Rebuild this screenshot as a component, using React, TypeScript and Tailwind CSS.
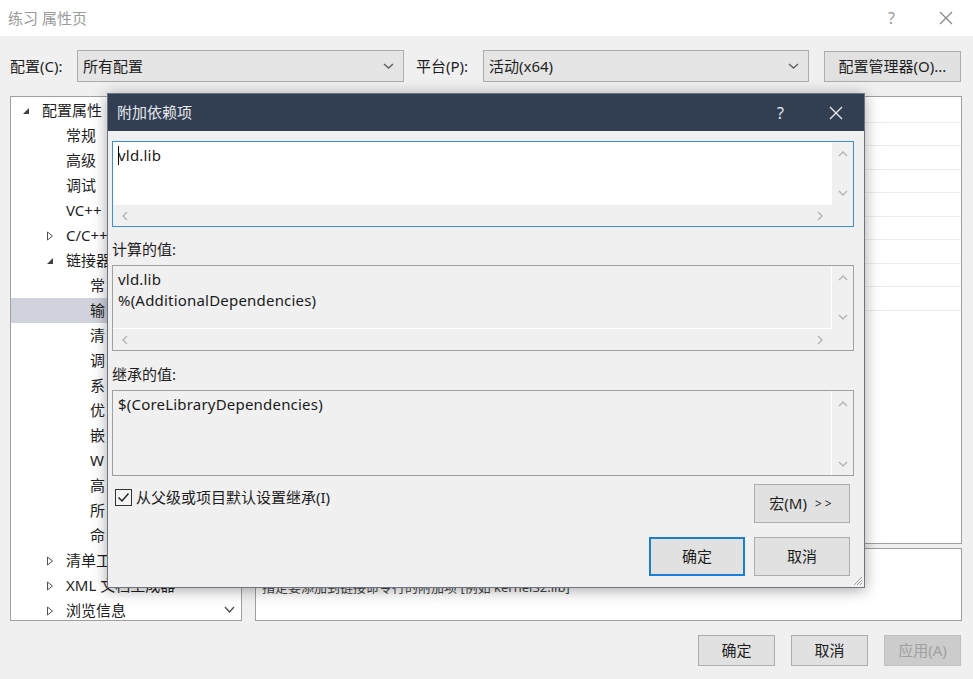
import React from "react";

const F = "font-['Noto_Sans','Noto_Sans_CJK_SC',sans-serif]";

function Chev({ dir, color = "#b4b4b4", w = 10, h = 6 }: { dir: "up" | "down" | "left" | "right"; color?: string; w?: number; h?: number }) {
  const vert = dir === "up" || dir === "down";
  const W = vert ? w : h;
  const H = vert ? h : w;
  let d = "";
  if (dir === "down") d = `M1 1 L${W / 2} ${H - 1} L${W - 1} 1`;
  if (dir === "up") d = `M1 ${H - 1} L${W / 2} 1 L${W - 1} ${H - 1}`;
  if (dir === "left") d = `M${W - 1} 1 L1 ${H / 2} L${W - 1} ${H - 1}`;
  if (dir === "right") d = `M1 1 L${W - 1} ${H / 2} L1 ${H - 1}`;
  return (
    <svg width={W} height={H} viewBox={`0 0 ${W} ${H}`}>
      <path d={d} fill="none" stroke={color} strokeWidth="1.4" />
    </svg>
  );
}

function Expanded() {
  return (
    <svg width="8" height="8" viewBox="0 0 8 8">
      <path d="M7 1 L7 7 L1 7 Z" fill="#404040" />
    </svg>
  );
}
function Collapsed() {
  return (
    <svg width="8" height="10" viewBox="0 0 8 10">
      <path d="M1.5 1 L6.5 5 L1.5 9 Z" fill="none" stroke="#505050" strokeWidth="1" />
    </svg>
  );
}

type Row = { t: string; lvl: number; exp?: "open" | "closed"; sel?: boolean };
const rows: Row[] = [
  { t: "配置属性", lvl: 0, exp: "open" },
  { t: "常规", lvl: 1 },
  { t: "高级", lvl: 1 },
  { t: "调试", lvl: 1 },
  { t: "VC++", lvl: 1 },
  { t: "C/C++", lvl: 1, exp: "closed" },
  { t: "链接器", lvl: 1, exp: "open" },
  { t: "常", lvl: 2 },
  { t: "输", lvl: 2, sel: true },
  { t: "清", lvl: 2 },
  { t: "调", lvl: 2 },
  { t: "系", lvl: 2 },
  { t: "优", lvl: 2 },
  { t: "嵌", lvl: 2 },
  { t: "W", lvl: 2 },
  { t: "高", lvl: 2 },
  { t: "所", lvl: 2 },
  { t: "命", lvl: 2 },
  { t: "清单工具", lvl: 1, exp: "closed" },
  { t: "XML 文档生成器", lvl: 1, exp: "closed" },
  { t: "浏览信息", lvl: 1, exp: "closed" },
];

function Tree() {
  return (
    <div className="w-[232px] h-[525px] bg-white border border-[#a0a0a0] flex overflow-hidden">
      <div className="flex-1 pt-[1px] overflow-hidden">
        {rows.map((r, i) => {
          const textLeft = r.lvl === 0 ? 31 : r.lvl === 1 ? 55 : 79;
          return (
            <div
              key={i}
              className={`h-[25px] flex items-center relative text-[15px] text-[#1e1e1e] whitespace-nowrap ${r.sel ? "bg-[#d0d2dc]" : ""}`}
            >
              {r.exp && (
                <span
                  className={`absolute flex items-center ${r.lvl === 0 ? "left-[11px]" : "left-[35px]"}`}
                >
                  {r.exp === "open" ? <Expanded /> : <Collapsed />}
                </span>
              )}
              <span style={{ paddingLeft: textLeft }}>{r.t}</span>
            </div>
          );
        })}
      </div>
      <div className="w-[24px] flex flex-col justify-end items-center pb-[7px]">
        <Chev dir="down" color="#505050" w={11} h={7} />
      </div>
    </div>
  );
}

function VScroll({ bg }: { bg: string }) {
  return (
    <div className={`w-[21px] flex flex-col items-center justify-between py-[9px] ${bg}`}>
      <Chev dir="up" />
      <Chev dir="down" />
    </div>
  );
}

function HScroll() {
  return (
    <div className="h-[21px] flex">
      <div className="flex-1 flex items-center justify-between pl-[9px] pr-[9px] bg-[#f0f0f0]">
        <Chev dir="left" />
        <Chev dir="right" />
      </div>
      <div className="w-[21px] bg-[#f0f0f0]" />
    </div>
  );
}

function Btn({ children, primary, w = 96, h = 39 }: { children: React.ReactNode; primary?: boolean; w?: number; h?: number }) {
  return (
    <div
      style={{ width: w, height: h }}
      className={`flex items-center justify-center text-[15px] text-[#1e1e1e] bg-[#e1e1e1] ${primary ? "border-2 border-[#1a7fd4]" : "border border-[#adadad]"}`}
    >
      {children}
    </div>
  );
}

function Dialog() {
  return (
    <div className="absolute left-[107px] top-[93px] w-[758px] h-[495px] bg-[#f0f0f0] border border-[#6f7580] shadow-[0_2px_14px_rgba(0,0,0,0.35)] flex flex-col">
      <div className="h-[37px] bg-[#323f52] flex items-center justify-between pl-[9px] pr-[21px] text-[#e6e9ee]">
        <span className="text-[15px]">附加依赖项</span>
        <div className="flex items-center gap-[45px]">
          <span className="text-[16px]">?</span>
          <svg width="14" height="14" viewBox="0 0 14 14">
            <path d="M1 1 L13 13 M13 1 L1 13" stroke="#e6e9ee" strokeWidth="1.4" />
          </svg>
        </div>
      </div>
      <div className="flex-1 pl-[4px] pr-[10px] pt-[10px] relative">
        <div className="h-[86px] border border-[#3a8fd8] bg-white flex flex-col">
          <div className="flex-1 flex">
            <div className="flex-1 bg-white pl-[5px] pt-[3px] text-[15px] leading-[21px] tracking-[0.2px] text-[#1a1a1a] relative">
              <span className="absolute left-[5px] top-[4px] w-[1px] h-[19px] bg-black" />
              vld.lib
            </div>
            <VScroll bg="bg-[#f0f0f0]" />
          </div>
          <HScroll />
        </div>
        <div className="h-[38px] flex items-end pb-[5px] text-[15px] text-[#1e1e1e]">计算的值:</div>
        <div className="h-[86px] border border-[#a0a0a0] bg-[#f0f0f0] flex flex-col">
          <div className="flex-1 flex">
            <div className="flex-1 pl-[5px] pt-[3px] text-[15px] leading-[21px] tracking-[0.2px] text-[#1a1a1a] border-r border-b border-white">
              <div>vld.lib</div>
              <div>%(AdditionalDependencies)</div>
            </div>
            <VScroll bg="bg-[#f0f0f0]" />
          </div>
          <HScroll />
        </div>
        <div className="h-[39px] flex items-end pb-[5px] text-[15px] text-[#1e1e1e]">继承的值:</div>
        <div className="h-[86px] border border-[#a0a0a0] bg-[#f0f0f0] flex">
          <div className="flex-1 pl-[5px] pt-[3px] text-[15px] leading-[21px] tracking-[0.2px] text-[#1a1a1a] border-r border-white">
            $(CoreLibraryDependencies)
          </div>
          <div className="w-[21px] flex flex-col items-center justify-between pt-[10px] pb-[8px]">
            <Chev dir="up" />
            <Chev dir="down" />
          </div>
        </div>
        <div className="flex justify-between items-start pt-[8px] pr-[4px]">
          <div className="flex items-center gap-[4px] pl-[3px] pt-[2px]">
            <svg width="17" height="17" viewBox="0 0 17 17">
              <rect x="0.5" y="0.5" width="16" height="16" fill="#f4f4f4" stroke="#333" />
              <path d="M3.5 8.5 L7 12 L13.5 4.5" fill="none" stroke="#222" strokeWidth="1.5" />
            </svg>
            <span className="text-[15px] text-[#1e1e1e]">从父级或项目默认设置继承(I)</span>
          </div>
          <Btn>
            <span>宏(M)</span>
            <span className="ml-[8px] text-[12px] tracking-[3px]">&gt;&gt;</span>
          </Btn>
        </div>
        <div className="flex justify-end gap-[9px] pt-[14px] pr-[4px]">
          <Btn primary>确定</Btn>
          <Btn>取消</Btn>
        </div>
        <svg className="absolute right-[1px] bottom-[1px]" width="10" height="10" viewBox="0 0 10 10">
          <path d="M9 1 L1 9 M9 4 L4 9 M9 7 L7 9" stroke="#a0a0a0" strokeWidth="1" />
        </svg>
      </div>
    </div>
  );
}

function Combo({ w, text }: { w: number; text: string }) {
  return (
    <div style={{ width: w }} className="h-[32px] bg-[#e5e5e5] border border-[#adadad] flex items-center justify-between pl-[5px] pr-[9px]">
      <span className="text-[15px] text-[#1e1e1e]">{text}</span>
      <Chev dir="down" color="#606060" w={11} h={6} />
    </div>
  );
}

export default function App() {
  return (
    <div className={`w-[973px] h-[679px] relative overflow-hidden bg-[#f0f0f0] ${F}`}>
      <div className="h-[36px] bg-white flex items-center justify-between pl-[8px] pr-[20px]">
        <span className="text-[15px] text-[#9a9a9a]">练习 属性页</span>
        <div className="flex items-center gap-[44px] text-[#9a9a9a]">
          <span className="text-[16px]">?</span>
          <svg width="14" height="14" viewBox="0 0 14 14">
            <path d="M1 1 L13 13 M13 1 L1 13" stroke="#8a8a8a" strokeWidth="1.3" />
          </svg>
        </div>
      </div>
      <div className="h-[32px] mt-[14px] flex items-center pl-[10px]">
        <span className="w-[67px] text-[15px] text-[#1e1e1e]">配置(C):</span>
        <Combo w={327} text="所有配置" />
        <span className="w-[67px] ml-[12px] text-[15px] text-[#1e1e1e]">平台(P):</span>
        <Combo w={326} text="活动(x64)" />
        <div className="ml-[15px] w-[137px] h-[31px] bg-[#e1e1e1] border border-[#adadad] flex items-center justify-center text-[15px] text-[#1e1e1e]">
          配置管理器(O)...
        </div>
      </div>
      <div className="mt-[14px] flex pl-[10px] gap-[13px]">
        <Tree />
        <div className="w-[707px] flex flex-col gap-[4px]">
          <div className="h-[448px] bg-white border border-[#a0a0a0] flex flex-col pt-[2px]">
            {Array.from({ length: 9 }).map((_, i) => (
              <div key={i} className="h-[23.5px] border-b border-[#ededed]" />
            ))}
          </div>
          <div className="h-[73px] bg-white border border-[#a0a0a0] pl-[6px] pt-[29px] text-[13px] text-[#444] whitespace-nowrap overflow-hidden">
            指定要添加到链接命令行的附加项 [例如 kernel32.lib]
          </div>
        </div>
      </div>
      <div className="mt-[14px] flex justify-end pr-[12px] gap-[16px]">
        <Btn w={77} h={31}>确定</Btn>
        <Btn w={77} h={31}>取消</Btn>
        <div className="w-[77px] h-[31px] bg-[#cccccc] border border-[#bfbfbf] flex items-center justify-center text-[15px] text-[#a0a0a0]">
          应用(A)
        </div>
      </div>
      <Dialog />
    </div>
  );
}
